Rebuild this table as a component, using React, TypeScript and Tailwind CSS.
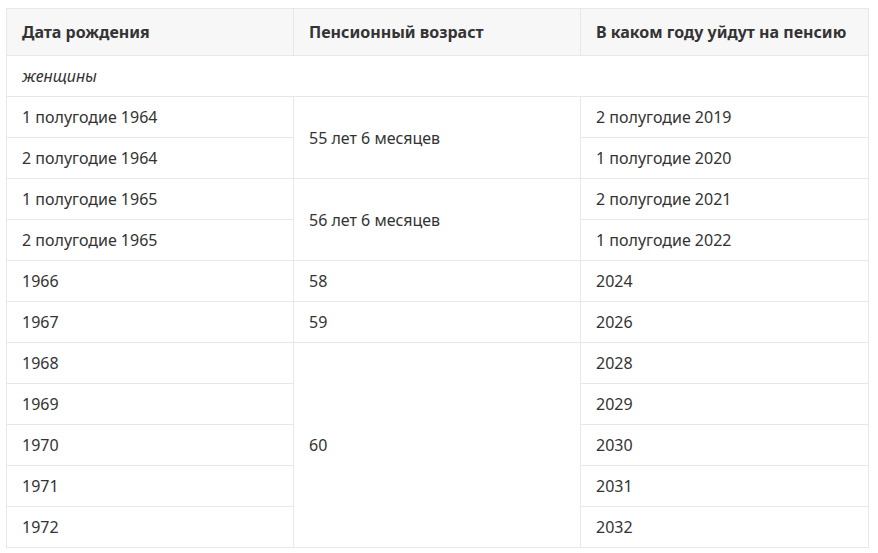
import React from "react";

const cell = "border border-[#e8e8e8] pl-[15px] pr-4 h-[41px] align-middle";

export default function App() {
  const rows: [string, string | null, number, string][] = [
    ["1 полугодие 1964", "55 лет 6 месяцев", 2, "2 полугодие 2019"],
    ["2 полугодие 1964", null, 0, "1 полугодие 2020"],
    ["1 полугодие 1965", "56 лет 6 месяцев", 2, "2 полугодие 2021"],
    ["2 полугодие 1965", null, 0, "1 полугодие 2022"],
    ["1966", "58", 1, "2024"],
    ["1967", "59", 1, "2026"],
    ["1968", "60", 5, "2028"],
    ["1969", null, 0, "2029"],
    ["1970", null, 0, "2030"],
    ["1971", null, 0, "2031"],
    ["1972", null, 0, "2032"],
  ];
  return (
    <div className="bg-white w-[878px] h-[553px] overflow-hidden pt-[8px] pl-[6px] text-[#333333] text-[16px] leading-[20px]" style={{ fontFamily: '"Noto Sans", Lato, sans-serif' }}>
      <table className="table-fixed border-collapse w-[862px]">
        <colgroup>
          <col className="w-[287px]" />
          <col className="w-[287px]" />
          <col className="w-[288px]" />
        </colgroup>
        <thead>
          <tr className="bg-[#f7f7f7]">
            <th className="border border-[#e8e8e8] pl-[15px] pr-4 h-[47px] text-left font-bold">Дата рождения</th>
            <th className="border border-[#e8e8e8] pl-[15px] pr-4 h-[47px] text-left font-bold">Пенсионный возраст</th>
            <th className="border border-[#e8e8e8] pl-[15px] pr-4 h-[47px] text-left font-bold">В каком году уйдут на пенсию</th>
          </tr>
        </thead>
        <tbody>
          <tr>
            <td colSpan={3} className={cell + " italic"}>женщины</td>
          </tr>
          {rows.map((r, i) => (
            <tr key={i}>
              <td className={cell}>{r[0]}</td>
              {r[1] !== null && (
                <td rowSpan={r[2]} className={cell}>{r[1]}</td>
              )}
              <td className={cell}>{r[3]}</td>
            </tr>
          ))}
        </tbody>
      </table>
    </div>
  );
}
